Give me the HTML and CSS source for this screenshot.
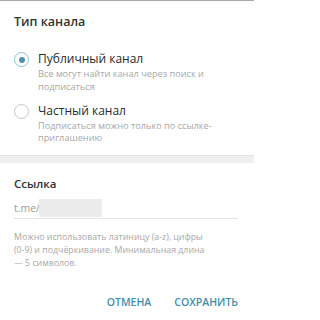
FILE: index.html
```html
<!DOCTYPE html>
<html lang="ru">
<head>
<meta charset="utf-8">
<link rel="stylesheet" href="styles.css">
</head>
<body>
<div class="dialog">
  <section class="type">
    <h1 class="title">Тип канала</h1>
    <div class="option">
      <span class="radio checked"></span>
      <div class="opt-text">
        <div class="opt-label">Публичный канал</div>
        <div class="opt-desc">Все могут найти канал через поиск и подписаться</div>
      </div>
    </div>
    <div class="option second">
      <span class="radio"></span>
      <div class="opt-text">
        <div class="opt-label">Частный канал</div>
        <div class="opt-desc">Подписаться можно только по ссылке-приглашению</div>
      </div>
    </div>
  </section>
  <div class="divider"></div>
  <section class="link">
    <h2 class="subtitle">Ссылка</h2>
    <div class="field"><span class="prefix">t.me/</span><span class="blur"></span></div>
    <p class="help">Можно использовать латиницу (a-z), цифры (0-9) и подчёркивание. Минимальная длина — 5 символов.</p>
    <div class="buttons">
      <button class="btn">ОТМЕНА</button>
      <button class="btn">СОХРАНИТЬ</button>
    </div>
  </section>
</div>
</body>
</html>
```

FILE: styles.css
```css
* { box-sizing: border-box; }
html, body { margin: 0; padding: 0; background: #fff; }
body {
  font-family: "Open Sans", "Noto Sans", sans-serif;
  color: #333;
  width: 254px;
  height: 320px;
  overflow: hidden;
}
.dialog {
  border-top: 1px solid #a8a8a8;
  display: flex;
  flex-direction: column;
  height: 100%;
}
.type { padding: 12px 14px 0 14px; height: 154px; }
.title {
  margin: 0;
  font-size: 12.5px;
  font-weight: 600;
  line-height: 17px;
  color: #333;
}
.option {
  display: flex;
  gap: 9px;
  margin-top: 21px;
}
.option.second { margin-top: 10px; }
.radio {
  flex: none;
  width: 15px;
  height: 15px;
  border-radius: 50%;
  border: 1.5px solid #c8c8c8;
  margin-top: 1px;
  display: flex;
  align-items: center;
  justify-content: center;
}
.radio.checked { border-color: #8cc4d6; }
.radio.checked::after {
  content: "";
  width: 6px;
  height: 6px;
  border-radius: 50%;
  background: #4e93ab;
}
.opt-label {
  font-size: 12px;
  font-weight: 400;
  line-height: 16px;
  color: #2a2a2a;
}
.opt-desc {
  font-size: 9.2px;
  line-height: 12.5px;
  color: #a8a8a8;
  margin-top: 1px;
}
.option.second .opt-desc { line-height: 12px; }
.divider {
  height: 8px;
  background: #efefef;
  border-top: 1px solid #e2e2e2;
  flex: none;
}
.link { padding: 13px 14px 0 14px; flex: 1; display: flex; flex-direction: column; }
.subtitle {
  margin: 0;
  font-size: 11.5px;
  font-weight: 600;
  line-height: 16px;
  color: #333;
}
.field {
  display: flex;
  align-items: center;
  height: 21px;
  margin-top: 6px;
  border-bottom: 1px solid #e4e4e4;
  width: 224px;
}
.prefix { font-size: 10.5px; color: #9a9a9a; }
.blur {
  width: 63px;
  height: 18px;
  background: #ececec;
  margin-left: -1px;
}
.help {
  margin: 12px 0 0 0;
  font-size: 8.8px;
  line-height: 13px;
  color: #a8a8a8;
  width: 200px;
}
.buttons {
  display: flex;
  justify-content: flex-end;
  gap: 23px;
  margin-top: 25px;
  padding-right: 2px;
}
.btn {
  border: 0;
  background: none;
  padding: 0;
  font-family: "Open Sans", "Noto Sans", sans-serif;
  font-size: 10.5px;
  font-weight: 600;
  color: #3f8fa9;
  line-height: 14px;
}
```
